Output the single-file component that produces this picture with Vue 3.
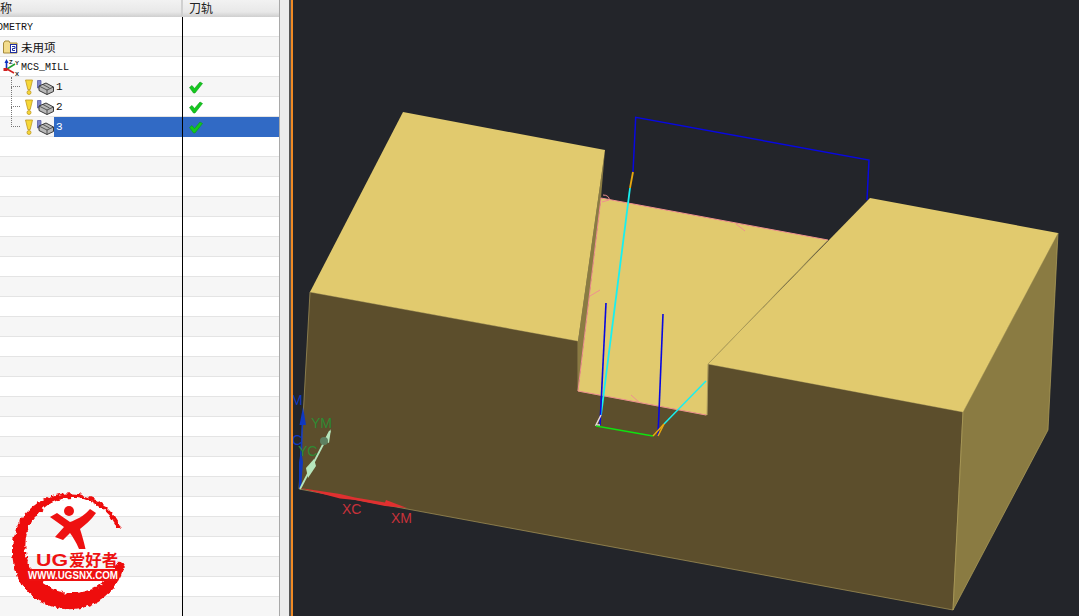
<template>
  <div class="app-shell">
    <aside class="tree-panel">
      <div class="tree-header">
        <div class="head-name">称</div>
        <div class="head-path">刀轨</div>
      </div>
      <div
        v-for="(row, index) in rows"
        :key="index"
        class="tree-row"
        :class="{ alt: index % 2 === 1 }"
      >
        <div class="cell-name">
          <span v-if="row.kind === 'root'" class="label mono root-label">GEOMETRY</span>
          <template v-else-if="row.kind === 'folder'">
            <svg class="icon-folder" width="15" height="14" viewBox="0 0 15 14">
              <path d="M0.500 3V13H14V3H7L6 1H2Z" fill="#f3dc8c" stroke="#a58a3c" />
              <rect x="7.500" y="4.500" width="6" height="8" fill="#fff" stroke="#2030a0" />
              <path d="M9 6.500H12V8.500H9.500V10.500H12" fill="none" stroke="#2030a0" />
            </svg>
            <span class="label cjk">未用项</span>
          </template>
          <template v-else-if="row.kind === 'mcs'">
            <svg class="icon-mcs" width="17" height="18" viewBox="0 0 17 18">
              <path d="M3.500 11V3" stroke="#1030c0" stroke-width="1.600" />
              <path d="M1.500 5L3.500 1L5.500 5Z" fill="#1030c0" />
              <path d="M4 11L12 6" stroke="#20a030" stroke-width="1.500" />
              <path d="M4 11L11 15" stroke="#d02020" stroke-width="1.600" />
              <rect x="0.500" y="10" width="4" height="3" fill="#d02020" />
              <text x="6" y="5.500" class="axis-mini">Z</text>
              <text x="12" y="7" class="axis-mini">Y</text>
              <text x="12" y="18" class="axis-mini">X</text>
            </svg>
            <span class="label mono mcs-label">MCS_MILL</span>
          </template>
          <template v-else-if="row.kind === 'op'">
            <span class="dots" :class="{ first: row.name === '1' }"></span>
            <svg class="icon-bulb" width="8" height="16" viewBox="0 0 8 16">
              <path d="M0.500 1H7.500L5.200 10.500H2.800Z" fill="#f6d838" stroke="#c09820" stroke-width="0.800" />
              <circle cx="4" cy="13.500" r="2" fill="#f6d838" stroke="#c09820" stroke-width="0.800" />
            </svg>
            <svg class="icon-op" width="17" height="15" viewBox="0 0 17 15">
              <path d="M0.500 0.500H4V8H0.500Z" fill="#7f86c8" stroke="#4a50a0" stroke-width="0.700" />
              <path d="M2 6L9 3L16.500 7V11.500L10 14.500L2 10.500Z" fill="#b8b8b8" stroke="#3a3a3a" />
              <path d="M2 6L10 10L16.500 7M10 10V14.500M6 4.500L12.500 8" fill="none" stroke="#3a3a3a" stroke-width="0.800" />
            </svg>
            <span class="label mono op-label" :class="{ selected: row.selected }">{{ row.name }}</span>
          </template>
        </div>
        <div class="cell-path" :class="{ selected: row.selected }">
          <svg v-if="row.kind === 'op'" class="icon-check" width="14" height="13" viewBox="0 0 14 13">
            <path d="M0.500 6.500L3 4.500L5.500 7.500L11 1L13.500 2.500L6 12H4.500Z" fill="#14c81e" stroke="#0c9a18" stroke-width="0.600" />
          </svg>
        </div>
      </div>

      <svg class="logo" width="120" height="124" viewBox="8 486 120 124">
        <defs>
          <filter id="brush" x="-10%" y="-10%" width="120%" height="120%">
            <feTurbulence type="fractalNoise" baseFrequency="0.22" numOctaves="2" seed="4" />
            <feDisplacementMap in="SourceGraphic" scale="6" xChannelSelector="R" yChannelSelector="G" />
          </filter>
        </defs>
        <path
          d="M122 530A57 58 0 1 0 125 562L117 563A47.500 47.500 0 1 1 117 528Z"
          fill="#ee1111"
          filter="url(#brush)"
        />
        <circle cx="69" cy="511" r="5" fill="#ee1111" />
        <path
          d="M50 517L57 513L70 522C76 520 84 516 90 509L96 513C91 520 85 525 80 529C82 535 84 542 85.500 549L79 549C76 542 73 537 70 533L63 540L55 537L64 527Z"
          fill="#ee1111"
        />
        <rect x="27" y="569" width="92" height="12" rx="2" fill="#ee1111" />
        <text x="36" y="566" class="logo-title" textLength="32" lengthAdjust="spacingAndGlyphs">UG</text>
        <text x="69" y="566" class="logo-title" textLength="49" lengthAdjust="spacingAndGlyphs">爱好者</text>
        <text x="28" y="579" class="logo-url" textLength="90" lengthAdjust="spacingAndGlyphs">WWW.UGSNX.COM</text>
      </svg>
    </aside>

    <div class="divider">
      <div class="divider-face"></div>
      <div class="divider-dark"></div>
      <div class="divider-orange"></div>
    </div>

    <main class="viewport">
      <svg class="scene" viewBox="293 0 786 616">
        <!-- solid faces, page coordinates -->
        <polygon points="310,292 578,341 578,391 707,415 708,364 963,412 953,610 299,489" fill="#5c4e2c" stroke="#a8975a" stroke-width="0.700" />
        <polygon points="963,412 1058,233 1048,430 953,610" fill="#8a7b42" stroke="#b3a25c" stroke-width="0.700" />
        <polygon points="601,198 828,240 708,364 707,415 578,391" fill="#e1ca6e" />
        <polygon points="605,150 601,198 578,391 578,341" fill="#8a7b42" />
        <polygon points="403,112 605,150 578,341 310,292" fill="#e1ca6e" />
        <polygon points="870,198 1058,233 963,412 708,364" fill="#e1ca6e" />
        <line x1="828" y1="240" x2="708" y2="364" stroke="#b3a25c" stroke-width="0.800" />
        <line x1="708" y1="364" x2="707" y2="415" stroke="#a8975a" stroke-width="0.800" />

        <!-- floor edge highlight -->
        <g fill="none" stroke="#f09090" stroke-width="1">
          <polyline points="828,240 601,198 578,391 706,415" />
          <line x1="736" y1="224" x2="745" y2="231" />
          <line x1="590" y1="296" x2="600" y2="290" />
          <line x1="631" y1="395" x2="640" y2="403" />
          <path d="M603 195a6 4 0 0 1 6 5l-7 2" />
        </g>

        <!-- toolpath -->
        <g fill="none" stroke-width="1.500">
          <polyline points="633,172 635.700,117.300 869,160 867,200" stroke="#0808e0" />
          <line x1="633" y1="172" x2="630" y2="188" stroke="#e8a810" stroke-width="1.800" />
          <line x1="630" y1="188" x2="601" y2="415" stroke="#18f0f0" stroke-width="1.800" />
          <line x1="664" y1="424" x2="706" y2="381" stroke="#18f0f0" />
          <line x1="606" y1="303" x2="600" y2="425" stroke="#0808e0" stroke-width="1.600" />
          <line x1="663" y1="314" x2="658" y2="436" stroke="#0808e0" stroke-width="1.600" />
          <polyline points="601,415 596,425 600,425" stroke="#e8d8d8" />
          <line x1="596" y1="426" x2="653" y2="436" stroke="#10e010" />
          <line x1="653" y1="436" x2="664" y2="424" stroke="#e8a810" />
          <line x1="658" y1="436" x2="664" y2="424" stroke="#e8a810" />
        </g>

        <!-- WCS / MCS triad -->
        <polygon points="299,489 301.500,425 299.500,425 303,407 306,425 303,425 301,489" fill="#1038c0" />
        <polygon points="299,489 299,462 301,450 303,462 301,489" fill="#1038c0" />
        <line x1="300" y1="489" x2="330" y2="431" stroke="#b6e6bc" stroke-width="1.800" />
        <polygon points="306,468 314,459 316,466 308,478" fill="#b6e6bc" />
        <polygon points="324,441 331,429 329,443" fill="#b6e6bc" />
        <circle cx="324" cy="441" r="4" fill="#5e8060" />
        <polygon points="300,488 340,494 355,497.500 385,502.500 386,500 407,508 385,506 355,500 340,498.500" fill="#e03030" />
        <text x="291" y="405" class="axis-label blue">M</text>
        <text x="292" y="445" class="axis-label blue">C</text>
        <text x="311" y="428" class="axis-label green">YM</text>
        <text x="298" y="456" class="axis-label green">YC</text>
        <text x="342" y="514" class="axis-label red">XC</text>
        <text x="391" y="523" class="axis-label red">XM</text>
      </svg>
    </main>
  </div>
</template>

<script setup>
const rows = [
  { kind: 'root' },
  { kind: 'folder' },
  { kind: 'mcs' },
  { kind: 'op', name: '1' },
  { kind: 'op', name: '2' },
  { kind: 'op', name: '3', selected: true },
  ...Array.from({ length: 24 }, () => ({ kind: 'empty' }))
]
</script>

<style scoped>
.app-shell {
  display: flex;
  width: 1079px;
  height: 616px;
  overflow: hidden;
  background: #23252a;
}

.tree-panel {
  position: relative;
  flex: 0 0 280px;
  height: 616px;
  overflow: hidden;
  background: #fff;
  border-right: 1px solid #a8a8a8;
  box-sizing: border-box;
}

.tree-header {
  display: grid;
  grid-template-columns: 183px 96px;
  height: 17px;
  background: linear-gradient(#f2f2f2, #e8e8e8 70%, #cfcfcf);
  font: 12px "Noto Sans CJK SC", sans-serif;
  line-height: 15px;
  color: #222;
}

.head-name {
  border-right: 2px solid #d0d0d0;
  box-sizing: border-box;
}

.head-path {
  padding-left: 6px;
}

.tree-row {
  display: grid;
  grid-template-columns: 183px 96px;
  height: 20px;
  box-sizing: border-box;
  border-bottom: 1px solid #e4e4e4;
  background: #fff;
}

.tree-row.alt {
  background: #f6f6f6;
}

.cell-name {
  position: relative;
  display: flex;
  align-items: center;
  height: 20px;
  box-sizing: border-box;
  border-right: 1px solid #000;
  color: #111;
  white-space: nowrap;
}

.cell-path {
  height: 20px;
  display: flex;
  align-items: center;
  padding-left: 6px;
  box-sizing: border-box;
}

.cell-path.selected {
  background: #316ac5;
}

.label {
  font-size: 10px;
}

.mono {
  font-family: "Liberation Mono", monospace;
}

.cjk {
  font: 11.5px "Noto Sans CJK SC", sans-serif;
  margin-left: 3px;
}

.root-label {
  margin-left: -15px;
}

.icon-folder {
  margin-left: 3px;
  flex: none;
}

.icon-mcs {
  margin-left: 3px;
  flex: none;
}

.mcs-label {
  margin-left: 1px;
}

.axis-mini {
  font: bold 6px "Liberation Sans", sans-serif;
  fill: #222;
}

.dots {
  position: absolute;
  left: 11px;
  top: -10px;
  width: 9px;
  height: 20px;
  border-left: 1px dotted #777;
  border-bottom: 1px dotted #777;
  box-sizing: border-box;
}

.dots.first {
  top: 0;
  height: 10px;
}

.icon-bulb {
  margin-left: 25px;
  flex: none;
}

.icon-op {
  margin-left: 4px;
  flex: none;
}

.op-label {
  align-self: stretch;
  flex: 1;
  display: flex;
  align-items: center;
  padding-left: 2px;
  font-size: 11px;
}

.op-label.selected {
  background: #316ac5;
  color: #fff;
}

.logo {
  position: absolute;
  left: 8px;
  top: 486px;
}

.logo-title {
  font: bold 16px "Liberation Sans", "Noto Sans CJK SC", sans-serif;
  fill: #ee1111;
}

.logo-url {
  font: bold 10px "Liberation Sans", sans-serif;
  fill: #fff;
}

.divider {
  display: flex;
  flex: 0 0 13px;
  height: 616px;
}

.divider-face {
  flex: 0 0 9px;
  background: #ececec;
}

.divider-dark {
  flex: 0 0 2px;
  background: #555;
}

.divider-orange {
  flex: 0 0 2px;
  background: #f08a24;
}

.viewport {
  flex: 1;
  height: 616px;
  background: #23252a;
}

.scene {
  display: block;
  width: 786px;
  height: 616px;
}

.axis-label {
  font: 14px "Liberation Sans", sans-serif;
}

.axis-label.blue {
  fill: #1038c0;
}

.axis-label.green {
  fill: #2f8a34;
}

.axis-label.red {
  fill: #c8323a;
}
</style>

<style>
html,
body {
  margin: 0;
  overflow: hidden;
  background: #23252a;
}
</style>
